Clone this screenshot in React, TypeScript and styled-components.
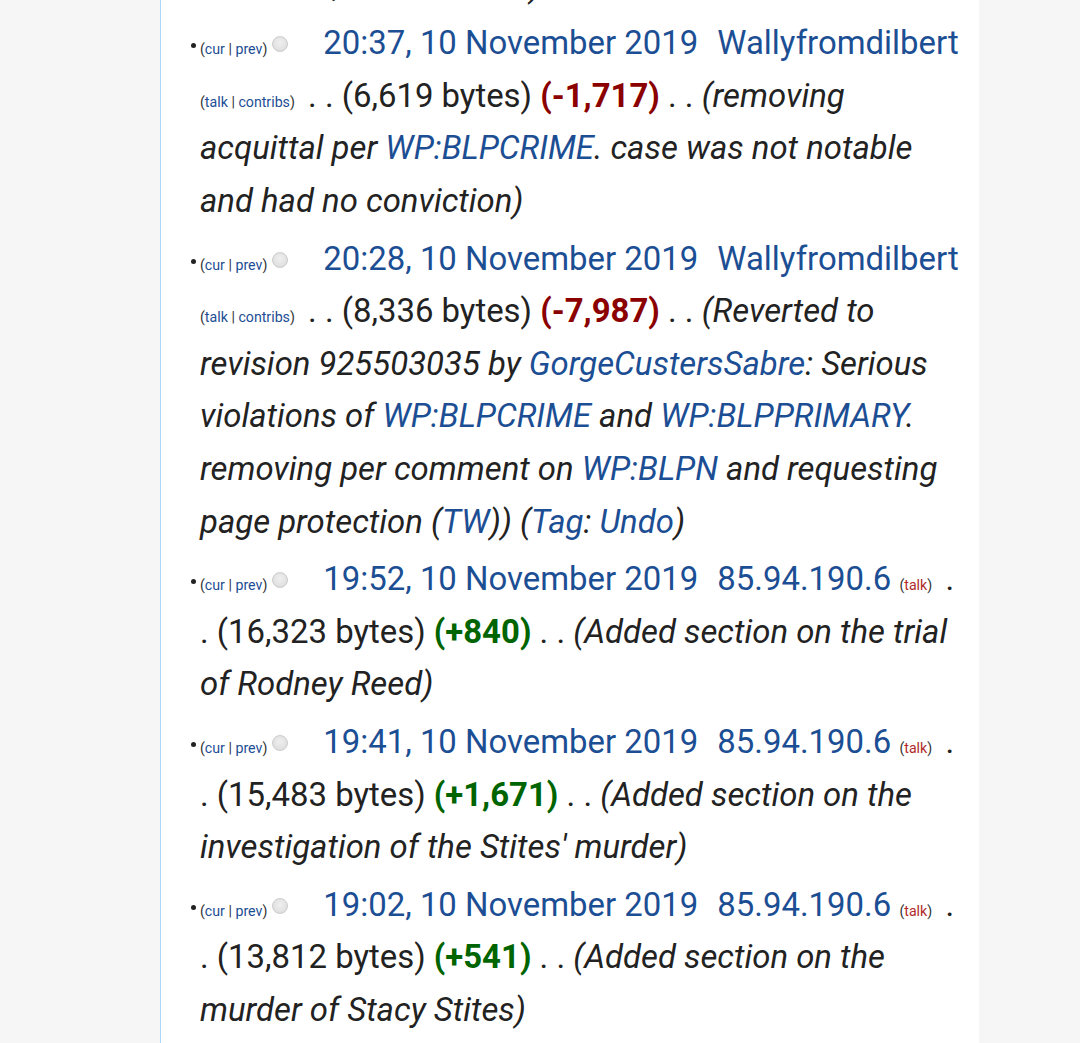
import React from "react";
import styled, { createGlobalStyle } from "styled-components";

const Global = createGlobalStyle`
  html, body { margin: 0; padding: 0; background: #f6f6f6; }
  body { font-family: Roboto, "Noto Sans", "Liberation Sans", sans-serif; color: #222; }
`;

const Page = styled.div`
  display: flex;
  min-height: 100vh;
  background: #f6f6f6;
  overflow: hidden;
`;

const Gutter = styled.div`
  flex: 0 0 160px;
`;

const Content = styled.main`
  flex: 0 0 819px;
  box-sizing: border-box;
  background: #fff;
  border-left: 1px solid #a7d7f9;
  padding: 0 16px 0 39px;
  font-size: 32.9px;
  line-height: 52.6px;
  color: #222;
`;

const Tail = styled.div`
  margin: -40.4px 0 5px;
  font-style: italic;
  white-space: nowrap;
`;

const List = styled.ul`
  list-style: none;
  margin: 0;
  padding: 0;
`;

const Item = styled.li`
  margin: 0 0 5px;
  &::before {
    content: "";
    display: inline-block;
    width: 5px;
    height: 5px;
    border-radius: 50%;
    background: #222;
    margin: 0 4px 0 -9px;
    vertical-align: 6px;
  }
`;

const Small = styled.span`
  font-size: 14.2px;
  line-height: 1;
  color: #333;
`;

const A = styled.a<{ $tone?: "blue" | "red" }>`
  color: ${(p) => (p.$tone === "red" ? "#b02a2a" : "#1c4e94")};
  text-decoration: none;
  cursor: pointer;
`;

const Radio = styled.span`
  display: inline-block;
  width: 16px;
  height: 16px;
  box-sizing: border-box;
  border-radius: 50%;
  border: 1px solid #cccccc;
  background: radial-gradient(circle at 50% 40%, #efefef, #d9d9d9);
  margin: 0 35px 0 5px;
  vertical-align: 2px;
`;

const DateLink = styled(A)``;

const UserLink = styled(A)`
  margin-left: 11px;
`;

const Sep = styled.span<{ $lead?: boolean }>`
  margin-left: ${(p) => (p.$lead ? "5px" : "0")};
`;

const Diff = styled.strong<{ $pos?: boolean }>`
  font-weight: 700;
  color: ${(p) => (p.$pos ? "#006400" : "#8b0000")};
`;

const Comment = styled.span`
  font-style: italic;
`;

type Entry = {
  time: string;
  user: string;
  ip?: boolean;
  bytes: string;
  diff: string;
  comment: React.ReactNode;
};

const entries: Entry[] = [
  {
    time: "20:37, 10 November 2019",
    user: "Wallyfromdilbert",
    bytes: "6,619",
    diff: "-1,717",
    comment: (
      <>
        (removing acquittal per <A>WP:BLPCRIME</A>. case was not notable and had no conviction)
      </>
    ),
  },
  {
    time: "20:28, 10 November 2019",
    user: "Wallyfromdilbert",
    bytes: "8,336",
    diff: "-7,987",
    comment: (
      <>
        (Reverted to revision 925503035 by <A>GorgeCustersSabre</A>: Serious violations of{" "}
        <A>WP:BLPCRIME</A> and <A>WP:BLPPRIMARY</A>. removing per comment on <A>WP:BLPN</A> and
        requesting page protection (<A>TW</A>)) (<A>Tag</A>: <A>Undo</A>)
      </>
    ),
  },
  {
    time: "19:52, 10 November 2019",
    user: "85.94.190.6",
    ip: true,
    bytes: "16,323",
    diff: "+840",
    comment: <>(Added section on the trial of Rodney Reed)</>,
  },
  {
    time: "19:41, 10 November 2019",
    user: "85.94.190.6",
    ip: true,
    bytes: "15,483",
    diff: "+1,671",
    comment: <>(Added section on the investigation of the Stites' murder)</>,
  },
  {
    time: "19:02, 10 November 2019",
    user: "85.94.190.6",
    ip: true,
    bytes: "13,812",
    diff: "+541",
    comment: <>(Added section on the murder of Stacy Stites)</>,
  },
];

function Row({ e }: { e: Entry }) {
  return (
    <Item>
      <Small>
        (<A>cur</A> | <A>prev</A>)
      </Small>
      <Radio />
      <DateLink>{e.time}</DateLink> <UserLink>{e.user}</UserLink>{" "}
      <Small>
        {e.ip ? (
          <>
            (<A $tone="red">talk</A>)
          </>
        ) : (
          <>
            (<A>talk</A> | <A>contribs</A>)
          </>
        )}
      </Small>{" "}
      <Sep $lead>. .</Sep> ({e.bytes} bytes) <Diff $pos={e.diff.startsWith("+")}>({e.diff})</Diff>{" "}
      <Sep>. .</Sep> <Comment>{e.comment}</Comment>
    </Item>
  );
}

export default function App() {
  return (
    <>
      <Global />
      <Page>
        <Gutter />
        <Content>
          <Tail>Reed trial, and the case)</Tail>
          <List>
            {entries.map((e, i) => (
              <Row key={i} e={e} />
            ))}
          </List>
        </Content>
      </Page>
    </>
  );
}
